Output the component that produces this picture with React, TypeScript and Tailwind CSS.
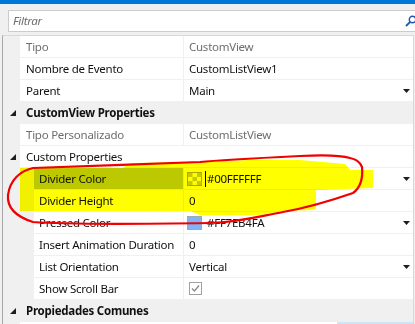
import React from "react";

function Tri() {
  return (
    <svg width="6" height="6" viewBox="0 0 6 6" className="block">
      <polygon points="6,0 6,6 0,6" fill="#1e1e1e" />
    </svg>
  );
}

function Arrow() {
  return (
    <svg width="7" height="4" viewBox="0 0 7 4" className="block">
      <polygon points="0,0 7,0 3.5,4" fill="#1e1e1e" />
    </svg>
  );
}

function Checker() {
  return (
    <svg width="15" height="14" viewBox="0 0 15 14" className="block -ml-[2px] mr-[3px]">
      <rect x="0.5" y="0.5" width="14" height="13" fill="#ffffff" stroke="#a8a8a8" />
      <rect x="1" y="1" width="4.5" height="4" fill="#c8c8c8" />
      <rect x="10" y="1" width="4.5" height="4" fill="#c8c8c8" />
      <rect x="5.5" y="5" width="4.5" height="4" fill="#c8c8c8" />
      <rect x="1" y="9" width="4.5" height="4" fill="#c8c8c8" />
      <rect x="10" y="9" width="4.5" height="4" fill="#c8c8c8" />
    </svg>
  );
}

function Swatch() {
  return (
    <svg width="15" height="14" viewBox="0 0 15 14" className="block -ml-[2px] mr-[3px]">
      <rect x="0.5" y="0.5" width="14" height="13" fill="#7eb4fa" stroke="#a8a8a8" />
    </svg>
  );
}

function Check() {
  return (
    <svg width="13" height="13" viewBox="0 0 13 13" className="block">
      <rect x="0.5" y="0.5" width="12" height="12" fill="#ffffff" stroke="#a0a0a0" />
      <polyline points="3,6.5 5.5,9 10,3.5" fill="none" stroke="#8a8a8a" strokeWidth="1.4" />
    </svg>
  );
}

type RowProps = {
  name: string;
  value?: React.ReactNode;
  nested?: boolean;
  readOnly?: boolean;
  arrow?: boolean;
  selected?: boolean;
};

function Row({ name, value, nested, readOnly, arrow, selected }: RowProps) {
  return (
    <div className="flex h-[22px]">
      <div className={nested ? "w-[31px] shrink-0" : "w-[17px] shrink-0"} />
      <div
        className={`${nested ? "w-[150px] pl-[5px]" : "w-[164px] pl-[6px]"} shrink-0 flex items-center whitespace-nowrap overflow-hidden border-r border-b border-[#f0f0f0] ${
          selected ? "bg-[#bcc8d4]" : "bg-white"
        } ${readOnly ? "text-[#6d6d6d]" : "text-[#111111]"}`}
      >
        {name}
      </div>
      <div
        className={`flex-1 flex items-center justify-between pl-[5px] pr-[3px] bg-white border-b border-[#f0f0f0] whitespace-nowrap ${
          readOnly ? "text-[#6d6d6d]" : "text-[#111111]"
        }`}
      >
        <div className="flex items-center">{value}</div>
        {arrow && <Arrow />}
      </div>
    </div>
  );
}

function Category({ name }: { name: string }) {
  return (
    <div className="flex h-[22px] items-center bg-[#f0f0f0]">
      <div className="w-[23px] shrink-0 pl-[7px]">
        <Tri />
      </div>
      <div className="font-bold text-[#111111] whitespace-nowrap">{name}</div>
    </div>
  );
}

function SubCategory({ name }: { name: string }) {
  return (
    <div className="flex h-[22px]">
      <div className="w-[17px] shrink-0 pl-[7px] flex items-center">
        <Tri />
      </div>
      <div className="flex-1 flex items-center pl-[6px] bg-white border-b border-[#f0f0f0] text-[#111111]">
        {name}
      </div>
    </div>
  );
}

export default function App() {
  return (
    <div className="relative w-[415px] h-[324px] overflow-hidden bg-[#f0f0f0] font-['Noto_Sans',sans-serif] text-[11.5px] tracking-[-0.25px] leading-none">
      <div className="h-[4px] bg-[#0078d7]" />
      <div className="pt-[6px] pl-[8px]">
        <div className="w-[412px] h-[22px] border border-[#cccccc] bg-white flex items-center justify-between pl-[4px] pr-[4px]">
          <span className="italic text-[#6d6d6d]">Filtrar</span>
          <svg width="12" height="12" viewBox="0 0 12 12" className="block -mr-[2px]">
            <circle cx="7.5" cy="4.5" r="3.2" fill="none" stroke="#1e56a8" strokeWidth="1.4" />
            <line x1="5.2" y1="6.8" x2="1" y2="11" stroke="#1e56a8" strokeWidth="1.8" />
          </svg>
        </div>
      </div>
      <div className="mt-[3px] ml-[2px] w-[412px] border-l border-t border-r border-l-[#a8a8a8] border-t-[#d8d8d8] border-r-[#d8d8d8] bg-[#f0f0f0]">
        <Row name="Tipo" value="CustomView" readOnly />
        <Row name="Nombre de Evento" value="CustomListView1" />
        <Row name="Parent" value="Main" arrow />
        <Category name="CustomView Properties" />
        <Row name="Tipo Personalizado" value="CustomListView" readOnly />
        <SubCategory name="Custom Properties" />
        <Row
          name="Divider Color"
          nested
          selected
          arrow
          value={
            <>
              <Checker />
              <span className="w-px h-[16px] bg-black mr-[1px]" />
              <span>#00FFFFFF</span>
            </>
          }
        />
        <Row name="Divider Height" nested value="0" />
        <Row
          name="Pressed Color"
          nested
          arrow
          value={
            <>
              <Swatch />
              <span className="ml-[2px]">#FF7EB4FA</span>
            </>
          }
        />
        <Row name="Insert Animation Duration" nested value="0" />
        <Row name="List Orientation" nested value="Vertical" arrow />
        <Row name="Show Scroll Bar" nested value={<Check />} />
        <Category name="Propiedades Comunes" />
        <div className="flex h-[22px]">
          <div className="w-[17px] shrink-0" />
          <div className="flex-1 bg-white relative">
            <div className="absolute right-0 top-0 w-[76px] h-[2px] bg-[#cde6f7]" />
          </div>
        </div>
      </div>

      <svg
        width="415"
        height="324"
        viewBox="0 0 415 324"
        className="absolute left-0 top-0 mix-blend-multiply pointer-events-none"
      >
        <polygon
          points="20,168 123,168 130,163 200,162 250,160 300,160 345,164 350,170 373,170 373,188 316,190 316,209 313,210 283,211 260,215 200,215 190,211 20,211"
          fill="#ffff00"
        />
      </svg>
      <svg
        width="415"
        height="324"
        viewBox="0 0 415 324"
        className="absolute left-0 top-0 pointer-events-none"
      >
        <path
          d="M 350 158 C 340 155, 320 155, 300 156 C 260 158, 220 160, 200 162 C 150 164, 80 166, 33 168 C 20 171, 10 180, 8 195 C 7 207, 14 216, 33 222 C 60 224, 140 224, 210 223 C 240 222, 260 216, 283 212 C 300 209, 330 201, 353 193 C 360 188, 363 178, 362 167 C 360 162, 357 159, 345 157"
          fill="none"
          stroke="#f00000"
          strokeWidth="2.2"
          strokeLinecap="round"
        />
      </svg>
    </div>
  );
}
